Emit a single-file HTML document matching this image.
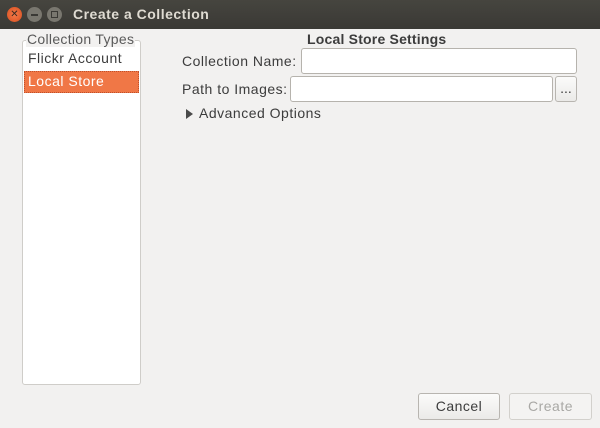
<!DOCTYPE html>
<html><head><style>
body{margin:0;width:600px;height:428px;background:#f2f1f0;font-family:"Liberation Sans","DejaVu Sans",sans-serif;font-size:14px;letter-spacing:0.5px;color:#3c3c3c;position:relative;overflow:hidden}
.a{position:absolute}
.title{left:0;top:0;width:600px;height:29px;background:linear-gradient(#46453f,#3a3935);}
.entry{background:#fff;border:1px solid #b6b3ad;border-radius:3px;box-sizing:border-box}
.btn{border:1px solid #b8b5b0;border-radius:3px;box-sizing:border-box;background:linear-gradient(#fbfbfa,#ebeae8);text-align:center;line-height:25px}
</style></head><body>
<div class="a title"></div>
<div class="a" style="left:7px;top:7px;width:15px;height:15px;border-radius:50%;background:radial-gradient(#f47a4a,#d84f1f);color:#3a2a20;font-size:10px;line-height:15px;text-align:center;letter-spacing:0">✕</div>
<div class="a" style="left:27px;top:7px;width:15px;height:15px;border-radius:50%;background:#79776f"><div style="margin:7px 4px;height:2px;background:#3a3935"></div></div>
<div class="a" style="left:47px;top:7px;width:15px;height:15px;border-radius:50%;background:#79776f"><div style="margin:4px;width:5px;height:5px;border:1px solid #3a3935"></div></div>
<div class="a" style="left:73px;top:6px;color:#dfdbd2;font-weight:bold;font-size:14px">Create a Collection</div>

<div class="a" style="left:22px;top:40px;width:119px;height:345px;border:1px solid #cfcdc9;box-sizing:border-box;border-radius:3px;background:#fff"></div>
<div class="a" style="left:26px;top:31px;background:#f2f1f0;padding:0 1px;color:#5a5a5a;font-size:14px;letter-spacing:0.3px">Collection Types</div>
<div class="a" style="left:28px;top:50px">Flickr Account</div>
<div class="a" style="left:24px;top:71px;width:115px;height:22px;background:#f07746;border:1px dotted #c0502a;box-sizing:border-box"></div>
<div class="a" style="left:28px;top:73px;color:#fff">Local Store</div>

<div class="a" style="left:307px;top:31px;font-weight:bold;letter-spacing:0.2px">Local Store Settings</div>
<div class="a" style="left:182px;top:53px">Collection Name:</div>
<div class="a entry" style="left:301px;top:48px;width:276px;height:26px"></div>
<div class="a" style="left:182px;top:81px">Path to Images:</div>
<div class="a entry" style="left:290px;top:76px;width:263px;height:26px"></div>
<div class="a btn" style="left:555px;top:76px;width:22px;height:26px;line-height:22px;letter-spacing:0">...</div>
<div class="a" style="left:186px;top:109px;width:0;height:0;border-left:7px solid #4a4a4a;border-top:5px solid transparent;border-bottom:5px solid transparent"></div>
<div class="a" style="left:199px;top:105px">Advanced Options</div>

<div class="a btn" style="left:418px;top:393px;width:82px;height:27px">Cancel</div>
<div class="a btn" style="left:509px;top:393px;width:83px;height:27px;color:#a9a8a5;background:#f4f3f2;border-color:#d2d0cc">Create</div>
</body></html>
